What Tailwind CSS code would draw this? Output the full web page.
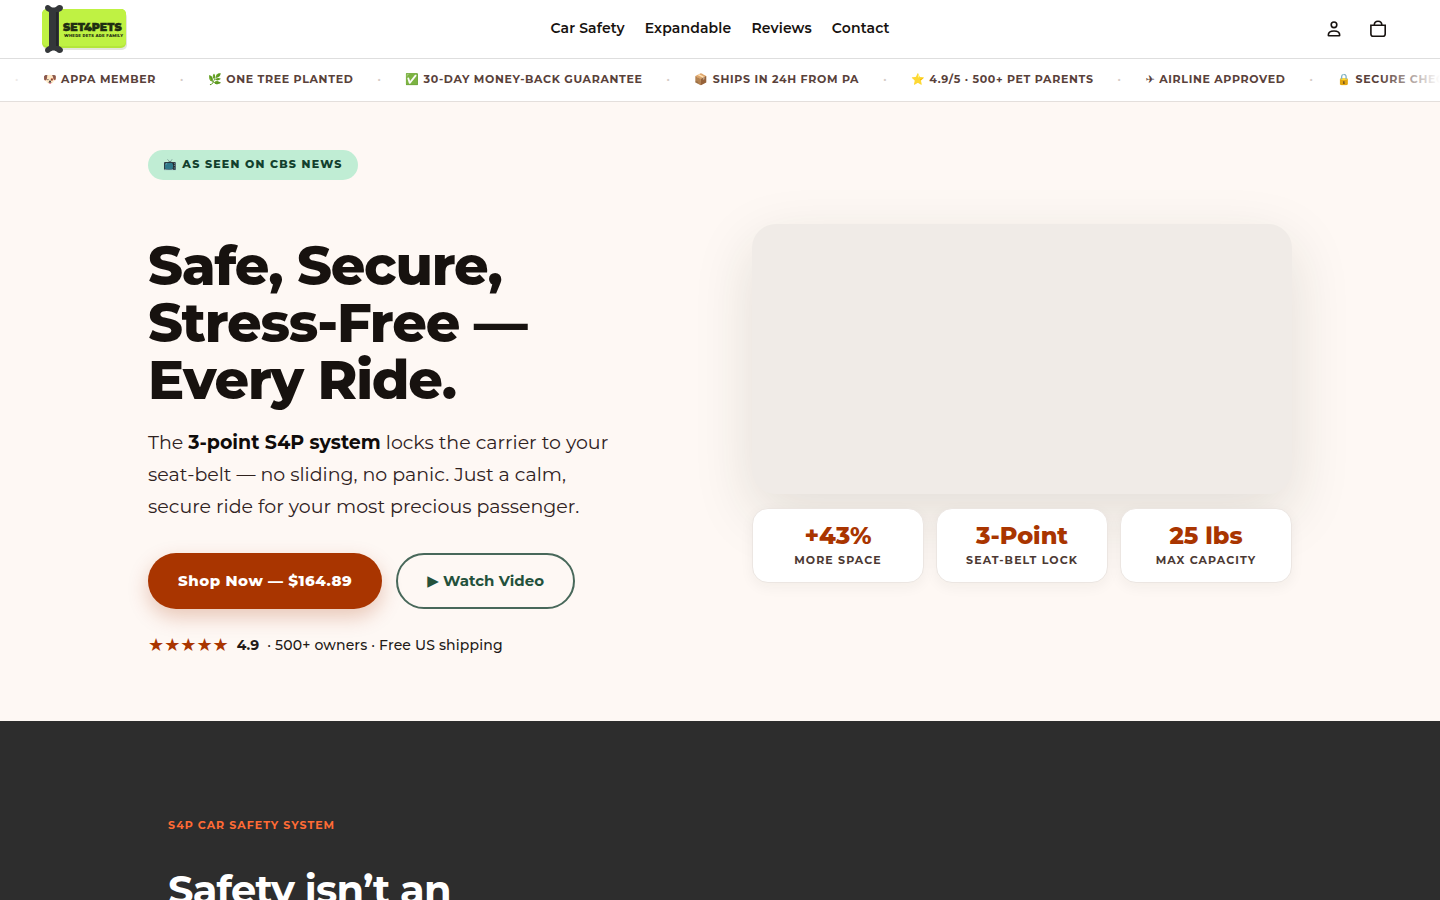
<!DOCTYPE html>
<html lang="en">
<head>
    <meta charset="UTF-8">
    <meta name="viewport" content="width=device-width, initial-scale=1.0">
    <title>SET4PETS</title>
    <!-- Tailwind CSS CDN -->
    <script src="https://cdn.jsdelivr.net/npm/@tailwindcss/browser@4"></script>
</head>
<body class="bg-[#fef8f4] text-[#17120f] font-['Montserrat','Inter','DejaVu_Sans','Noto_Color_Emoji',sans-serif]">
    <!-- Header -->
    <header class="bg-white border-b border-[#dedede]">
        <div class="grid grid-cols-[1fr_auto_1fr] items-center h-[58px] px-10">
            <a href="#" aria-label="SET4PETS home" class="justify-self-start">
                <svg class="w-[88px] h-[50px]" viewBox="0 0 88 50">
                    <rect x="3" y="8" width="84" height="38" rx="5" fill="#e3e6da"/>
                    <rect x="2" y="5" width="84" height="39" rx="5" fill="#b4e63a"/>
                    <rect x="2" y="5" width="84" height="37" rx="5" fill="#bff243"/>
                    <path d="M5 4c0-3 3-4 5-2 2 2 5 2 7 0s6-1 6 2c0 2-2 3-4 4v34c2 1 4 2 4 4 0 3-4 4-6 2s-5-2-7 0-5 1-5-2c0-2 2-3 4-4V8C7 7 5 6 5 4z" fill="#34373a"/>
                    <path d="M17 8v34" stroke="#24272a" stroke-width="2"/>
                    <text x="23" y="27" font-size="11" font-weight="900" fill="#1f2e12" stroke="#1f2e12" stroke-width=".4">SET4PETS</text>
                    <text x="24" y="33" font-size="4" font-weight="800" letter-spacing=".2" fill="#1f2e12">WHERE PETS ARE FAMILY</text>
                </svg>
            </a>
            <nav class="flex gap-5 pb-0.5 text-sm font-semibold tracking-[0.01em]">
                <a href="#">Car Safety</a>
                <a href="#">Expandable</a>
                <a href="#">Reviews</a>
                <a href="#">Contact</a>
            </nav>
            <div class="flex justify-self-end">
                <button class="size-11 flex items-center justify-center" aria-label="Account">
                    <svg class="size-5" viewBox="0 0 20 20" fill="none" stroke="currentColor" stroke-width="1.6">
                        <circle cx="10" cy="5.800" r="2.800"/>
                        <path d="M4.300 16.200c0-2.600 2.300-4.200 5.700-4.200s5.700 1.600 5.700 4.200c0 .4-.2.600-.6.600H4.900c-.4 0-.6-.2-.6-.6z"/>
                    </svg>
                </button>
                <button class="size-11 flex items-center justify-center" aria-label="Cart">
                    <svg class="size-5" viewBox="0 0 20 20" fill="none" stroke="currentColor" stroke-width="1.6">
                        <path d="M2.900 6.200h14.300v8.800a2.300 2.300 0 0 1-2.300 2.300H5.200A2.300 2.300 0 0 1 2.900 15z"/>
                        <path d="M6.300 6C6.300 3.600 7.700 2.200 10 2.200S13.800 3.600 13.800 6"/>
                    </svg>
                </button>
            </div>
        </div>
    </header>

    <!-- Trust ticker -->
    <div class="relative bg-white border-b border-[#e4dfdc] overflow-hidden">
        <ul class="flex items-center gap-6 h-[42px] pl-[15px] pb-0.5 whitespace-nowrap text-[11px] font-bold tracking-[0.06em] text-[#59413a]">
            <li class="text-[#d5cbc6]">·</li>
            <li>🐶 APPA MEMBER</li>
            <li class="text-[#d5cbc6]">·</li>
            <li>🌿 ONE TREE PLANTED</li>
            <li class="text-[#d5cbc6]">·</li>
            <li>✅ 30-DAY MONEY-BACK GUARANTEE</li>
            <li class="text-[#d5cbc6]">·</li>
            <li>📦 SHIPS IN 24H FROM PA</li>
            <li class="text-[#d5cbc6]">·</li>
            <li>⭐ 4.9/5 · 500+ PET PARENTS</li>
            <li class="text-[#d5cbc6]">·</li>
            <li><span class="font-['DejaVu_Sans'] leading-none">✈&#xFE0E;</span> AIRLINE APPROVED</li>
            <li class="text-[#d5cbc6]">·</li>
            <li>🔒 SECURE CHECKOUT</li>
        </ul>
        <div class="absolute inset-y-0 left-0 w-10 bg-linear-to-r from-white to-white/0"></div>
        <div class="absolute inset-y-0 right-0 w-15 bg-linear-to-l from-white to-white/0"></div>
    </div>

    <!-- Hero -->
    <section class="px-7 pt-12 pb-16">
        <div class="max-w-[1144px] mx-auto grid lg:grid-cols-2 gap-16 items-center">
            <div>
                <span class="inline-flex items-center h-[30px] px-[15px] pb-0.5 rounded-full bg-[#c0edd4] text-[#12402d] text-[11px] font-extrabold tracking-[0.11em]">📺 AS SEEN ON CBS NEWS</span>
                <h1 class="mt-[58px] text-[54px] leading-[57px] font-extrabold tracking-[-1.2px]">Safe, Secure,<br>Stress-Free —<br>Every Ride.</h1>
                <p class="mt-[18px] text-[19px] leading-8 text-[#30221e]">The <strong class="font-bold text-[#100c0a]">3-point S4P system</strong> locks the carrier to your<br>seat-belt — no sliding, no panic. Just a calm,<br>secure ride for your most precious passenger.</p>
                <div class="mt-[30px] flex flex-wrap gap-[14px]">
                    <button class="h-14 px-[30px] rounded-full bg-[#a93500] text-white text-[15px] font-extrabold tracking-[0.5px] shadow-[0_8px_20px_rgba(169,53,0,0.25)]">Shop Now — $164.89</button>
                    <button class="h-14 px-[29px] rounded-full border-2 border-[#48685a] text-[#24513b] text-[15px] font-bold"><span class="font-['DejaVu_Sans']">▶&#xFE0E;</span> Watch Video</button>
                </div>
                <p class="mt-6 flex items-center gap-2 text-sm leading-6 font-medium text-[#231a17]">
                    <span class="text-lg leading-6 font-['DejaVu_Sans'] text-[#a93500]">★★★★★</span>
                    <strong class="font-bold">4.9</strong>
                    <span class="tracking-[0.01em]">· 500+ owners · Free US shipping</span>
                </p>
            </div>
            <div>
                <div class="h-[270px] rounded-3xl bg-[#f0ebe7] shadow-[0_20px_60px_rgba(40,45,20,0.13)]"></div>
                <dl class="relative mt-[14px] grid grid-cols-3 gap-3 text-center">
                    <div class="flex flex-col-reverse justify-center h-[75px] rounded-2xl border border-[#ece6e2] bg-white shadow-[0_4px_14px_rgba(40,30,20,0.05)]">
                        <dt class="text-[11px] leading-5 font-bold tracking-widest text-[#4c3933]">MORE SPACE</dt>
                        <dd class="text-2xl leading-7 font-extrabold text-[#a93500]">+43%</dd>
                    </div>
                    <div class="flex flex-col-reverse justify-center h-[75px] rounded-2xl border border-[#ece6e2] bg-white shadow-[0_4px_14px_rgba(40,30,20,0.05)]">
                        <dt class="text-[11px] leading-5 font-bold tracking-widest text-[#4c3933]">SEAT-BELT LOCK</dt>
                        <dd class="text-2xl leading-7 font-extrabold text-[#a93500]">3-Point</dd>
                    </div>
                    <div class="flex flex-col-reverse justify-center h-[75px] rounded-2xl border border-[#ece6e2] bg-white shadow-[0_4px_14px_rgba(40,30,20,0.05)]">
                        <dt class="text-[11px] leading-5 font-bold tracking-widest text-[#4c3933]">MAX CAPACITY</dt>
                        <dd class="text-2xl leading-7 font-extrabold text-[#a93500]">25 lbs</dd>
                    </div>
                </dl>
            </div>
        </div>
    </section>

    <!-- Car safety -->
    <section class="bg-[#2d2d2d] px-7 py-24">
        <div class="max-w-[1104px] mx-auto">
            <p class="text-[11px] leading-4 font-bold tracking-[1px] text-[#ff6b35]">S4P CAR SAFETY SYSTEM</p>
            <h2 class="mt-8 text-[40px] leading-[50px] font-bold tracking-[-0.02em] text-white">Safety isn’t an<br>accessory.</h2>
        </div>
    </section>
</body>
</html>
